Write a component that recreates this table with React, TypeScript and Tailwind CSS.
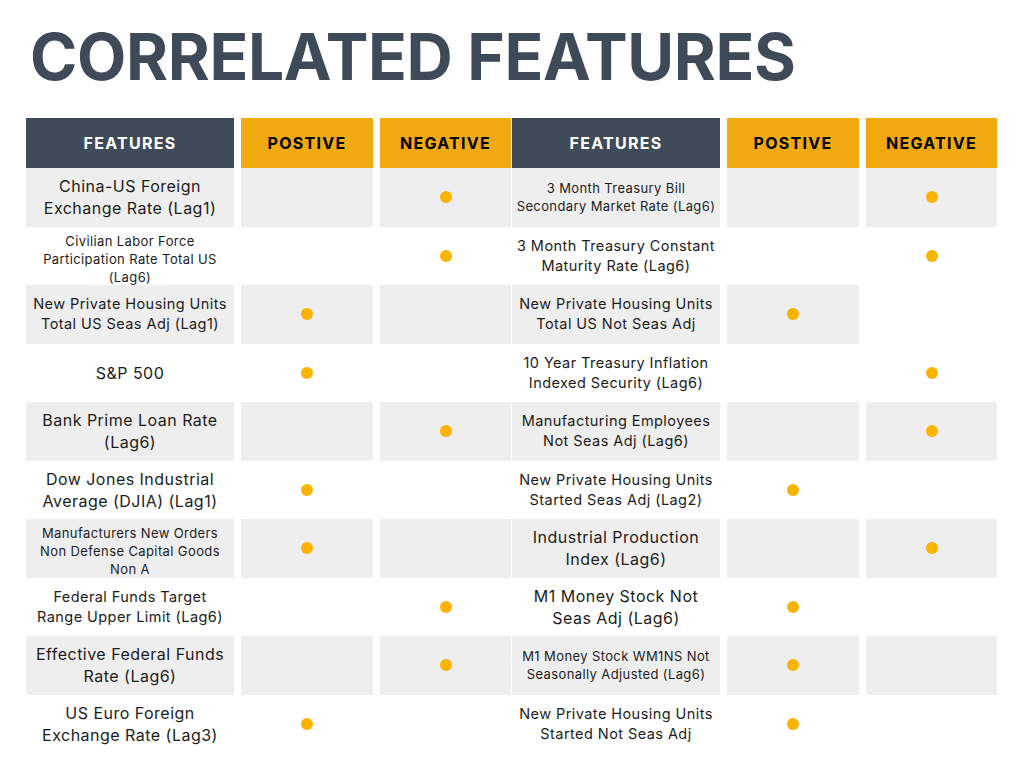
type Row = {
  label: string[];
  size: "lg" | "md" | "sm";
  pos: boolean;
  neg: boolean;
  grayNeg?: boolean;
};

const leftRows: Row[] = [
  { label: ["China-US Foreign", "Exchange Rate (Lag1)"], size: "lg", pos: false, neg: true },
  { label: ["Civilian Labor Force", "Participation Rate Total US", "(Lag6)"], size: "sm", pos: false, neg: true },
  { label: ["New Private Housing Units", "Total US Seas Adj (Lag1)"], size: "md", pos: true, neg: false },
  { label: ["S&P 500"], size: "lg", pos: true, neg: false },
  { label: ["Bank Prime Loan Rate", "(Lag6)"], size: "lg", pos: false, neg: true },
  { label: ["Dow Jones Industrial", "Average (DJIA) (Lag1)"], size: "lg", pos: true, neg: false },
  { label: ["Manufacturers New Orders", "Non Defense Capital Goods", "Non A"], size: "sm", pos: true, neg: false },
  { label: ["Federal Funds Target", "Range Upper Limit (Lag6)"], size: "md", pos: false, neg: true },
  { label: ["Effective Federal Funds", "Rate (Lag6)"], size: "lg", pos: false, neg: true },
  { label: ["US Euro Foreign", "Exchange Rate (Lag3)"], size: "lg", pos: true, neg: false },
];

const rightRows: Row[] = [
  { label: ["3 Month Treasury Bill", "Secondary Market Rate (Lag6)"], size: "sm", pos: false, neg: true },
  { label: ["3 Month Treasury Constant", "Maturity Rate (Lag6)"], size: "md", pos: false, neg: true },
  { label: ["New Private Housing Units", "Total US Not Seas Adj"], size: "md", pos: true, neg: false, grayNeg: false },
  { label: ["10 Year Treasury Inflation", "Indexed Security (Lag6)"], size: "md", pos: false, neg: true },
  { label: ["Manufacturing Employees", "Not Seas Adj (Lag6)"], size: "md", pos: false, neg: true },
  { label: ["New Private Housing Units", "Started Seas Adj (Lag2)"], size: "md", pos: true, neg: false },
  { label: ["Industrial Production", "Index (Lag6)"], size: "lg", pos: false, neg: true },
  { label: ["M1 Money Stock Not", "Seas Adj (Lag6)"], size: "lg", pos: true, neg: false },
  { label: ["M1 Money Stock WM1NS Not", "Seasonally Adjusted (Lag6)"], size: "sm", pos: true, neg: false },
  { label: ["New Private Housing Units", "Started Not Seas Adj"], size: "md", pos: true, neg: false },
];

const sizeClass = {
  lg: "text-[16px] leading-[22px]",
  md: "text-[14.5px] leading-[20px]",
  sm: "text-[13px] leading-[18px]",
};

const Dot = () => <span className="block w-[12px] h-[12px] rounded-full bg-[#fab400]" />;

const Half = ({ rows }: { rows: Row[] }) => {
  return (
    <div className="grid grid-cols-[208px_132px_131px] gap-x-[7px] w-[485px]">
      <div className="h-[50px] bg-[#3f4b58] flex items-center justify-center text-white font-bold text-[16px] tracking-[0.08em]">
        FEATURES
      </div>
      <div className="h-[50px] bg-[#f0a90e] flex items-center justify-center text-black font-bold text-[16px] tracking-[0.08em]">
        POSTIVE
      </div>
      <div className="h-[50px] bg-[#f0a90e] flex items-center justify-center text-black font-bold text-[16px] tracking-[0.08em]">
        NEGATIVE
      </div>
      {rows.map((r, i) => {
        const gray = i % 2 === 0;
        const negGray = gray && r.grayNeg !== false;
        const threeLines = r.label.length > 2;
        return [
          <div
            key={`f${i}`}
            className={`h-[58.5px] flex flex-col items-center justify-center text-center text-[#1c1c1c] tracking-[0.03em] ${sizeClass[r.size]} ${threeLines ? "pt-[6px]" : ""} ${gray ? "bg-[#eeeeee]" : "bg-white"}`}
          >
            {r.label.map((l) => (
              <span key={l} className="whitespace-nowrap">{l}</span>
            ))}
          </div>,
          <div
            key={`p${i}`}
            className={`h-[58.5px] flex items-center justify-center ${gray ? "bg-[#eeeeee]" : "bg-white"}`}
          >
            {r.pos && <Dot />}
          </div>,
          <div
            key={`n${i}`}
            className={`h-[58.5px] flex items-center justify-center ${negGray ? "bg-[#eeeeee]" : "bg-white"}`}
          >
            {r.neg && <Dot />}
          </div>,
        ];
      })}
    </div>
  );
};

export default function App() {
  return (
    <div className="w-[1024px] h-[768px] bg-white overflow-hidden font-['Inter',sans-serif]">
      <div className="pl-[30px] pt-[25px] h-[94px]">
        <h1 className="text-[64px] leading-none font-bold text-[#3e4a57] tracking-[-0.005em]">
          CORRELATED FEATURES
        </h1>
      </div>
      <div className="flex pl-[26px] pt-[24px] gap-x-px">
        <Half rows={leftRows} />
        <Half rows={rightRows} />
      </div>
    </div>
  );
}
